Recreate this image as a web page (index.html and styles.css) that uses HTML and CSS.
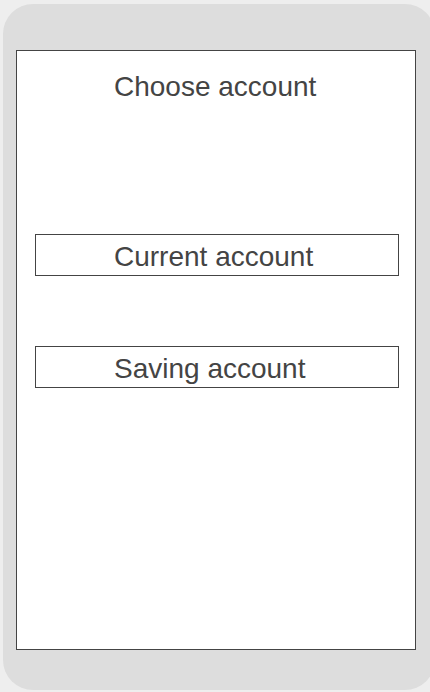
FILE: index.html
```html
<!DOCTYPE html>
<html>
<head>
<meta charset="utf-8">
<link rel="stylesheet" href="styles.css">
</head>
<body>
<div class="phone">
  <div class="screen">
    <div class="title">Choose account</div>
    <div class="options">
      <div class="option">Current account</div>
      <div class="option">Saving account</div>
    </div>
  </div>
</div>
</body>
</html>
```
FILE: styles.css
```css
html, body {
  margin: 0;
  padding: 0;
  background: #eeeeee;
  overflow: hidden;
  width: 430px;
  height: 692px;
}
.phone {
  box-sizing: border-box;
  margin: 4px 0 0 3px;
  width: 432px;
  height: 686px;
  border-radius: 30px;
  background: #dddddd;
  padding: 46px 0 0 13px;
}
.screen {
  box-sizing: border-box;
  width: 400px;
  height: 600px;
  background: #ffffff;
  border: 1px solid #444444;
  font-family: "Liberation Sans", Arial, sans-serif;
  color: #444444;
  font-size: 28px;
}
.title {
  margin-top: 20px;
  padding-left: 97px;
  line-height: 32px;
}
.options {
  display: flex;
  flex-direction: column;
  gap: 70px;
  margin: 131px 0 0 18px;
}
.option {
  box-sizing: border-box;
  width: 364px;
  height: 42px;
  border: 1px solid #444444;
  padding: 2px 0 0 78px;
  line-height: 40px;
  white-space: nowrap;
}
```
